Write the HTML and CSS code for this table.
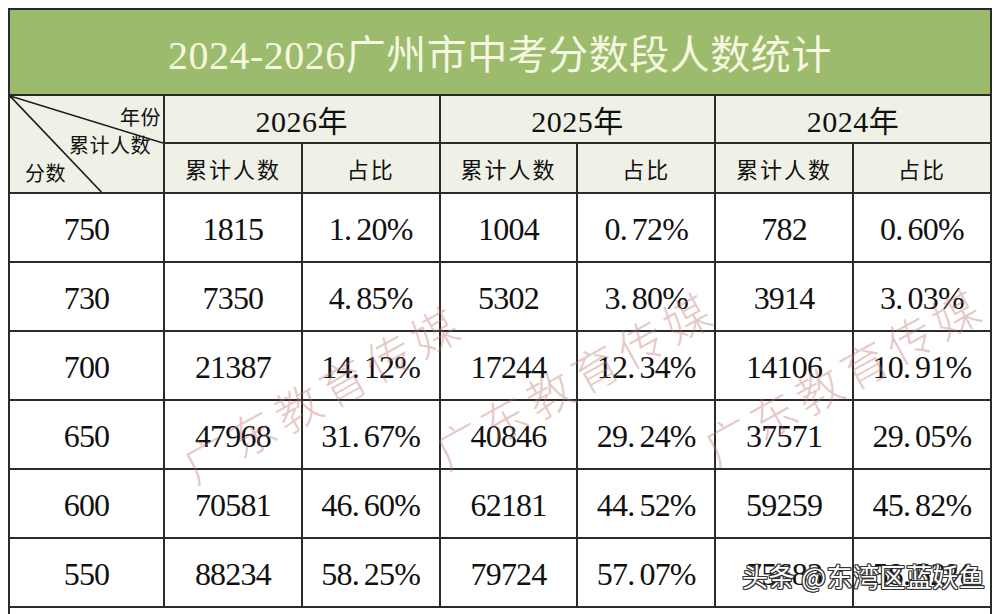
FILE: index.html
```html
<!DOCTYPE html>
<html lang="zh-CN">
<head>
<meta charset="utf-8">
<title>2024-2026广州市中考分数段人数统计</title>
<link rel="stylesheet" href="styles.css">
</head>
<body>
<div class="page">
  <table class="grid">
    <colgroup>
      <col class="c-score"><col class="c-data"><col class="c-data"><col class="c-data"><col class="c-data"><col class="c-data"><col class="c-data">
    </colgroup>
    <tr class="title-row"><th colspan="7" class="title">2024-2026广州市中考分数段人数统计</th></tr>
    <tr class="head1">
      <th rowspan="2" class="diag">
        <svg class="diag-lines" viewBox="0 0 154 98" preserveAspectRatio="none">
          <line x1="0" y1="0" x2="154" y2="48" />
          <line x1="0" y1="0" x2="92" y2="98" />
        </svg>
        <span class="dl dl-year">年份</span>
        <span class="dl dl-count">累计人数</span>
        <span class="dl dl-score">分数</span>
      </th>
      <th colspan="2" class="year">2026年</th>
      <th colspan="2" class="year">2025年</th>
      <th colspan="2" class="year">2024年</th>
    </tr>
    <tr class="head2">
      <th class="sub">累计人数</th><th class="sub">占比</th>
      <th class="sub">累计人数</th><th class="sub">占比</th>
      <th class="sub">累计人数</th><th class="sub">占比</th>
    </tr>
    <tr class="row"><td>750</td><td>1815</td><td>1<span class="dot">.</span>20%</td><td>1004</td><td>0<span class="dot">.</span>72%</td><td>782</td><td>0<span class="dot">.</span>60%</td></tr>
    <tr class="row"><td>730</td><td>7350</td><td>4<span class="dot">.</span>85%</td><td>5302</td><td>3<span class="dot">.</span>80%</td><td>3914</td><td>3<span class="dot">.</span>03%</td></tr>
    <tr class="row"><td>700</td><td>21387</td><td>14<span class="dot">.</span>12%</td><td>17244</td><td>12<span class="dot">.</span>34%</td><td>14106</td><td>10<span class="dot">.</span>91%</td></tr>
    <tr class="row"><td>650</td><td>47968</td><td>31<span class="dot">.</span>67%</td><td>40846</td><td>29<span class="dot">.</span>24%</td><td>37571</td><td>29<span class="dot">.</span>05%</td></tr>
    <tr class="row"><td>600</td><td>70581</td><td>46<span class="dot">.</span>60%</td><td>62181</td><td>44<span class="dot">.</span>52%</td><td>59259</td><td>45<span class="dot">.</span>82%</td></tr>
    <tr class="row"><td>550</td><td>88234</td><td>58<span class="dot">.</span>25%</td><td>79724</td><td>57<span class="dot">.</span>07%</td><td>75683</td><td>58<span class="dot">.</span>52%</td></tr>
    <tr class="tail"><td colspan="7"></td></tr>
  </table>

  <div class="wm wm-1">广东教育传媒</div>
  <div class="wm wm-2">广东教育传媒</div>
  <div class="wm wm-3">广东教育传媒</div>

  <div class="credit">头条 @东湾区蓝妖鱼</div>
</div>
</body>
</html>
```
FILE: styles.css
```css
html, body {
  margin: 0;
  padding: 0;
  background: #ffffff;
}

.page {
  position: relative;
  width: 1000px;
  height: 614px;
  overflow: hidden;
  padding: 8px 0 0 8px;
  box-sizing: border-box;
  background: #ffffff;
  font-family: "Liberation Serif", "Noto Sans CJK SC", serif;
  color: #111111;
}

.grid {
  border-collapse: collapse;
  table-layout: fixed;
  width: 982px;
}

.c-score { width: 155px; }
.c-data { width: 137.8px; }

.grid th,
.grid td {
  border: 2px solid #2b2b2b;
  padding: 0;
  text-align: center;
  vertical-align: middle;
  font-weight: normal;
}

.title-row { height: 86px; }

.title {
  background: #9dbb6c;
  color: #f5f7e0;
  font-family: "Liberation Serif", "Noto Sans CJK SC", serif;
  font-size: 40px;
  font-weight: normal;
  padding-top: 6px;
  letter-spacing: 0.5px;
}

.head1 { height: 48px; }
.head2 { height: 50px; }

.head1 th,
.head2 th {
  background: #eff1e7;
}

.year {
  font-size: 30px;
  letter-spacing: 0.5px;
}

.sub {
  font-size: 22px;
  letter-spacing: 2px;
  padding-top: 2px;
}

.diag {
  position: relative;
  overflow: hidden;
}

.diag-lines {
  position: absolute;
  left: 0;
  top: 0;
  width: 100%;
  height: 100%;
}

.diag-lines line {
  stroke: #1a1a1a;
  stroke-width: 1.6;
  vector-effect: non-scaling-stroke;
}

.dl {
  position: absolute;
  font-size: 20px;
  line-height: 20px;
  white-space: nowrap;
  letter-spacing: 0.5px;
}

.dl-year { left: 110px; top: 12px; }
.dl-count { left: 59px; top: 40px; }
.dl-score { left: 15px; top: 68px; }

.row { height: 69px; }

.row td {
  font-size: 32px;
  letter-spacing: -0.8px;
  padding-top: 4px;
  background: #ffffff;
}

.dot {
  padding-right: 5px;
}

.tail { height: 40px; }

.tail td { background: #ffffff; }

.wm {
  position: absolute;
  font-family: "Noto Sans CJK SC", sans-serif;
  font-weight: 300;
  font-size: 46px;
  letter-spacing: 6px;
  color: rgba(190, 110, 110, 0.38);
  white-space: nowrap;
  transform: translate(-50%, -50%) rotate(-29deg);
  pointer-events: none;
}

.wm-1 { left: 322px; top: 392px; }
.wm-2 { left: 574px; top: 378px; }
.wm-3 { left: 843px; top: 374px; }

.credit {
  position: absolute;
  left: 742px;
  top: 558px;
  font-family: "Noto Sans CJK SC", sans-serif;
  font-size: 26px;
  line-height: 36px;
  color: #ffffff;
  letter-spacing: 0.5px;
  white-space: nowrap;
  text-shadow:
    1px 0 0 #333, -1px 0 0 #333, 0 1px 0 #333, 0 -1px 0 #333,
    1px 1px 0 #333, -1px -1px 0 #333, 1px -1px 0 #333, -1px 1px 0 #333;
}
```
